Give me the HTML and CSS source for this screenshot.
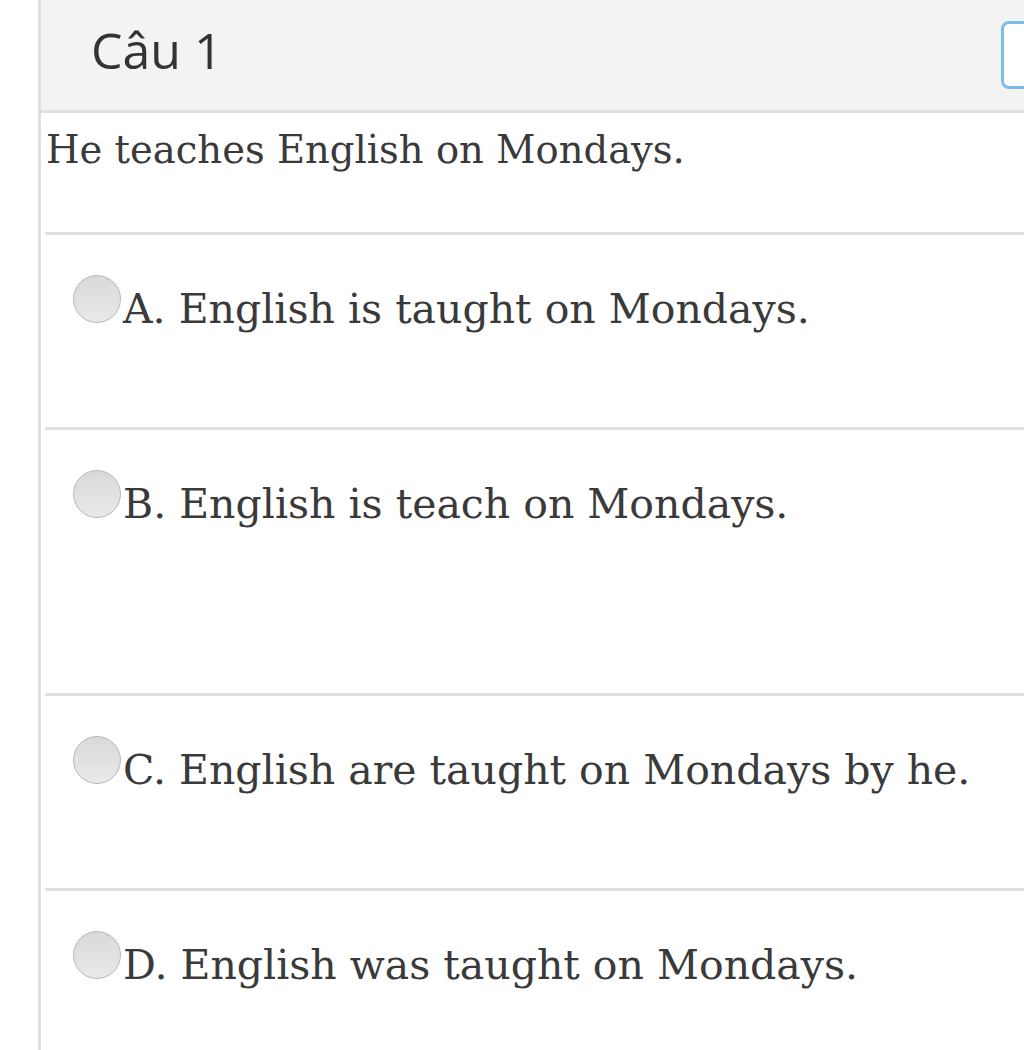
FILE: index.html
```html
<!DOCTYPE html>
<html lang="vi">
<head>
    <meta charset="UTF-8">
    <meta name="viewport" content="width=device-width, initial-scale=1.0">
    <title>Câu 1</title>
    <link rel="stylesheet" href="styles.css">
</head>
<body>
    <div class="page">
        <div class="question">
            <div class="question-head">
                <h2>Câu 1</h2>
                <span class="flag-box"></span>
            </div>

            <div class="question-text">
                <p>He teaches English on Mondays.</p>
            </div>

            <label class="option">
                <span class="radio"></span>
                <span class="option-text">A. English is taught on Mondays.</span>
            </label>
            <label class="option option-tall">
                <span class="radio"></span>
                <span class="option-text">B. English is teach on Mondays.</span>
            </label>
            <label class="option">
                <span class="radio"></span>
                <span class="option-text">C. English are taught on Mondays by he.</span>
            </label>
            <label class="option">
                <span class="radio"></span>
                <span class="option-text">D. English was taught on Mondays.</span>
            </label>
        </div>
    </div>
</body>
</html>
```

FILE: styles.css
```css
body {
    margin: 0;
    padding: 0;
    background-color: #fff;
    color: #3a3a3a;
    font-family: "DejaVu Serif", serif;
}

.page {
    padding-left: 38px;
    overflow: hidden;
    height: 1050px;
}

.question {
    border-left: 3px solid #e0e0e0;
    min-height: 1050px;
}

.question-head {
    display: flex;
    align-items: center;
    justify-content: space-between;
    height: 110px;
    padding-left: 50px;
    background-color: #f3f3f3;
    border-bottom: 3px solid #e0e0e0;
}

.question-head h2 {
    margin: 0 0 11px;
    font-family: "Open Sans", sans-serif;
    font-weight: 400;
    font-size: 50px;
    color: #333;
}

.flag-box {
    width: 60px;
    height: 62px;
    margin-right: -43px;
    border: 3px solid #7dbce6;
    border-radius: 8px;
    background-color: #fff;
}

.question-text {
    height: 119px;
    padding-left: 5px;
}

.question-text p {
    margin: 0;
    padding-top: 8px;
    font-size: 38.5px;
    line-height: 58px;
}

.option {
    display: flex;
    align-items: flex-start;
    margin-left: 4px;
    height: 195px;
    padding-top: 40px;
    padding-left: 28px;
    box-sizing: border-box;
    border-top: 3px solid #e0e0e0;
}

.option-tall {
    height: 266px;
}

.radio {
    flex: none;
    width: 46px;
    height: 46px;
    border: 1px solid #b8b8b8;
    border-radius: 50%;
    background: linear-gradient(#d9d9d9, #e9e9e9);
}

.option-text {
    padding-left: 2px;
    font-size: 41px;
    line-height: 76px;
    margin-top: -4px;
}
```
